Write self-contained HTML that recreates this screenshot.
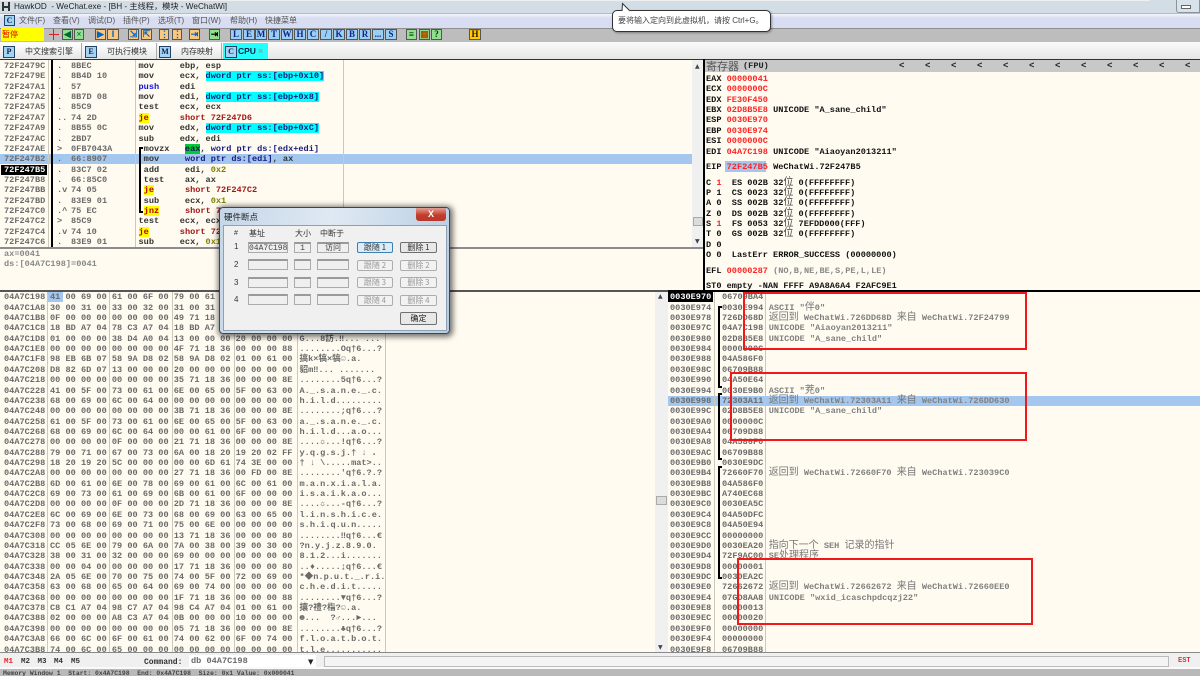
<!DOCTYPE html>
<html><head><meta charset="utf-8"><style>
html,body{margin:0;padding:0;width:1200px;height:676px;overflow:hidden;background:#fffbf0}
#w{position:absolute;left:0;top:0;width:1200px;height:676px;overflow:hidden;filter:blur(.3px);font-family:"Liberation Mono","Noto Sans CJK SC",monospace}
#w div,#w pre{position:absolute;margin:0}
pre{font:bold 8.6px/10.36px "Liberation Mono","Noto Sans CJK SC",monospace;white-space:pre}
.g{color:#6a6a6a}.d{color:#333}.k{color:#111}
.c{font:10px/0 "Noto Sans CJK SC",sans-serif;color:#777}
.cy{background:#0ff;color:#1a1a80}.ye{background:#ff0;color:#b00}.n{color:#1a1a80}.o{color:#808000}.rd{color:#a01818}.bl{color:#11d}
.gr{background:#0c3;color:#115}
.l{background:#ccc8ba;width:1px}
.u{font:8px/12px "Liberation Sans","Noto Sans CJK SC",sans-serif;color:#555;white-space:nowrap}
.b{width:10px;height:9px;top:29px;border:1px solid #555;background:#99cff2;font:bold 9px/9px "Liberation Serif",serif;color:#128;text-align:center;box-sizing:content-box}
.o2{background:#fbc77e;color:#06c}.g2{background:#90e090;color:#063}
.tab{top:43px;height:16px;background:linear-gradient(#fff,#e6e6e6);border-right:1px solid #aaa}
.ti{top:46px;width:10px;height:10px;border:1px solid #246;background:#a3d3f5;font:bold 8px/10px "Liberation Serif",serif;color:#124;text-align:center}
.t{font:8px/12px "Liberation Sans","Noto Sans CJK SC",sans-serif;color:#333;white-space:nowrap}
.inp{background:#efefef;border:1px solid #ababab;border-top:2px solid #9a9a9a;box-sizing:border-box;height:11px;font:8px/9px "Liberation Mono","Noto Sans CJK SC",monospace;color:#444;text-align:center}
.btn{width:36px;height:11px;border:1px solid #adadad;border-radius:2px;background:#f2f2f2;box-sizing:border-box;font:8px/9px "Noto Sans CJK SC",sans-serif;color:#999;text-align:center}
.bk{background:#000}
.red{border:2px solid #f01818;box-sizing:border-box}
.br{font:bold 9px/12px "Liberation Mono",monospace;color:#222;top:60px}
</style></head><body><div id="w">

<!-- title -->
<div style="left:0;top:0;width:1200px;height:14px;background:#d2dde6"></div>
<div style="left:0;top:0;width:1150px;height:1px;background:#f0f0f0"></div>
<div style="left:0;top:13px;width:1200px;height:1px;background:#b5bcc2"></div>
<div style="left:2px;top:2px;width:2px;height:9px;background:#333"></div>
<div style="left:8px;top:2px;width:2px;height:9px;background:#333"></div>
<div style="left:4px;top:6px;width:4px;height:2px;background:#333"></div>
<div class="t" style="left:14px;top:1px;font-size:8.2px;color:#222">HawkOD&nbsp; - WeChat.exe - [BH - 主线程，模块 - WeChatWi]</div>
<div style="left:1176px;top:0;width:24px;height:13px;background:#d8e2ea;border:1px solid #8a949c;border-top:0;border-radius:0 0 0 3px;box-sizing:border-box"></div>
<div style="left:1181px;top:5px;width:8px;height:2px;border:1px solid #666;background:#fff"></div>

<!-- menu -->
<div style="left:0;top:14px;width:1200px;height:14px;background:linear-gradient(#f4f6fc,#d8ddf1 30%,#d8ddf1)"></div>
<div class="ti" style="left:4px;top:15px;width:9px;height:9px">C</div>
<div class="u" style="left:19px;top:15px">文件(F)</div>
<div class="u" style="left:53px;top:15px">查看(V)</div>
<div class="u" style="left:88px;top:15px">调试(D)</div>
<div class="u" style="left:123px;top:15px">插件(P)</div>
<div class="u" style="left:158px;top:15px">选项(T)</div>
<div class="u" style="left:192px;top:15px">窗口(W)</div>
<div class="u" style="left:230px;top:15px">帮助(H)</div>
<div class="u" style="left:265px;top:15px">快捷菜单</div>

<!-- toolbar -->
<div style="left:0;top:28px;width:1200px;height:13px;background:#bdbdbd;border-top:1px solid #8f8f8f;border-bottom:1px solid #fff"></div>
<div style="left:1px;top:28px;width:42px;height:13px;background:#ffff00;font:8px/13px 'Noto Sans CJK SC',sans-serif;color:#e00000;padding-left:1px">暂停</div>
<div style="left:49px;top:34px;width:10px;height:1px;background:#d22"></div><div style="left:53px;top:29px;width:1px;height:11px;background:#d22"></div>
<div class="b g2" style="left:62px;width:9px">◀</div>
<div class="b g2" style="left:74px;width:8px">×</div>
<div class="b o2" style="left:95px;width:9px">▶</div>
<div class="b o2" style="left:107px">‖</div>
<div class="b o2" style="left:128px;width:9px">⇲</div>
<div class="b o2" style="left:141px;width:9px">⇱</div>
<div class="b o2" style="left:159px;width:8px">⋮</div>
<div class="b o2" style="left:172px;width:8px">⋮</div>
<div class="b o2" style="left:189px;width:9px">⇥</div>
<div class="b g2" style="left:209px;width:9px;color:#000">⇥</div>
<div class="b" style="left:230px">L</div><div class="b" style="left:243px">E</div><div class="b" style="left:255px">M</div><div class="b" style="left:268px">T</div><div class="b" style="left:281px">W</div><div class="b" style="left:294px">H</div><div class="b" style="left:307px">C</div><div class="b" style="left:320px">/</div><div class="b" style="left:333px">K</div><div class="b" style="left:346px">B</div><div class="b" style="left:359px">R</div><div class="b" style="left:372px">...</div><div class="b" style="left:385px">S</div>
<div class="b g2" style="left:406px;width:9px;color:#030">≡</div>
<div class="b g2" style="left:419px;width:9px;color:#a50">▦</div>
<div class="b g2" style="left:431px;width:9px;color:#030">?</div>
<div class="b" style="left:469px;width:10px;background:#fc0;color:#310">H</div>

<!-- tabs -->
<div style="left:0;top:42px;width:1200px;height:17px;background:linear-gradient(#fafafa,#e6e6e6)"></div>
<div class="tab" style="left:1px;width:80px"></div><div class="tab" style="left:84px;width:72px"></div><div class="tab" style="left:158px;width:63px"></div>
<div class="tab" style="left:223px;width:45px;background:#2ff;border:0"></div>
<div class="ti" style="left:3px">P</div><div class="t" style="left:25px;top:46px">中文搜索引擎</div>
<div class="ti" style="left:85px">E</div><div class="t" style="left:107px;top:46px">可执行模块</div>
<div class="ti" style="left:159px">M</div><div class="t" style="left:181px;top:46px">内存映射</div>
<div class="ti" style="left:225px;top:46px">C</div><div style="left:238px;top:46px;font:bold 8.5px/11px 'Liberation Sans',sans-serif;color:#124">CPU</div>
<div style="left:258px;top:46px;font:bold 9px/11px 'Liberation Sans',sans-serif;color:#7aa">×</div>

<!-- frame lines -->
<div class="bk" style="left:0;top:59px;width:1200px;height:1px;background:#333"></div>

<!-- disasm -->
<div style="left:0;top:154px;width:692px;height:10px;background:#a3c7ee"></div>
<div style="left:1px;top:165px;width:46px;height:10px;background:#000"></div>
<div class="l" style="left:48px;top:60px;height:188px"></div>
<div class="l" style="left:135px;top:60px;height:188px"></div>
<div class="l" style="left:343px;top:60px;height:188px"></div>
<div class="bk" style="left:51px;top:60px;width:2px;height:188px"></div>
<pre class="g" style="left:4px;top:61px">72F2479C
72F2479E
72F247A1
72F247A2
72F247A5
72F247A7
72F247A9
72F247AC
72F247AE
72F247B2
<span style="color:#fff">72F247B5</span>
72F247B8
72F247BB
72F247BD
72F247C0
72F247C2
72F247C4
72F247C6</pre>
<pre class="g" style="left:57px;top:61px">.
.
.
.
.
..
.
.
&gt;
.
.
.
.v
.
.^
&gt;
.v
.</pre>
<pre class="g" style="left:71px;top:61px">8BEC
8B4D 10
57
8B7D 08
85C9
74 2D
8B55 0C
2BD7
0FB7043A
66:8907
83C7 02
66:85C0
74 05
83E9 01
75 EC
85C9
74 10
83E9 01</pre>
<pre class="d" style="left:138.5px;top:61px">mov     ebp, esp
mov     ecx, <span class="cy">dword ptr ss:[ebp+0x10]</span>
<span class="bl">push</span>    edi
mov     edi, <span class="cy">dword ptr ss:[ebp+0x8]</span>
test    ecx, ecx
<span class="ye">je</span>      <span class="rd">short 72F247D6</span>
mov     edx, <span class="cy">dword ptr ss:[ebp+0xC]</span>
sub     edx, edi
 movzx   <span class="gr">eax</span>, <span class="n">word ptr ds:[edx+edi]</span>
 mov     <span class="n">word ptr ds:[edi]</span>, ax
 add     edi, <span class="o">0x2</span>
 test    ax, ax
 <span class="ye">je</span>      <span class="rd">short 72F247C2</span>
 sub     ecx, <span class="o">0x1</span>
 <span class="ye">jnz</span>     <span class="rd">short 72F247AE</span>
test    ecx, ecx
<span class="ye">je</span>      <span class="rd">short 72F247D6</span>
sub     ecx, <span class="o">0x1</span></pre>
<div class="bk" style="left:139px;top:147px;width:1.5px;height:65px"></div>
<div class="bk" style="left:139px;top:147px;width:4px;height:1.5px"></div>
<div class="bk" style="left:139px;top:211px;width:4px;height:1.5px"></div>

<!-- disasm scrollbar -->
<div style="left:692px;top:60px;width:11px;height:188px;background:#f0f0f0"></div>
<div style="left:693px;top:217px;width:10px;height:9px;background:#dcdcdc;border:1px solid #aaa;box-sizing:border-box"></div>
<div style="left:695px;top:64px;font:6px/6px 'DejaVu Sans';color:#444">▲</div>
<div style="left:695px;top:239px;font:6px/6px 'DejaVu Sans';color:#444">▼</div>

<!-- info -->
<div style="left:0;top:247px;width:703px;height:2px;background:#8c8c8c"></div>
<pre class="g" style="left:4px;top:249px;color:#888">ax=0041
ds:[04A7C198]=0041</pre>

<!-- registers -->
<div style="left:703px;top:60px;width:497px;height:231px;background:#fffbf0"></div>
<div style="left:703px;top:60px;width:497px;height:12px;background:#c8c8c8"></div>
<div class="bk" style="left:703px;top:59px;width:1.5px;height:232px"></div>
<div style="left:706px;top:59px;font:11px/14px 'Noto Sans CJK SC',sans-serif;color:#555">寄存器</div>
<div class="br" style="left:743px;font-size:8.6px">(FPU)</div>
<div class="br" style="left:899px">&lt;</div><div class="br" style="left:925px">&lt;</div><div class="br" style="left:951px">&lt;</div><div class="br" style="left:977px">&lt;</div><div class="br" style="left:1003px">&lt;</div><div class="br" style="left:1029px">&lt;</div><div class="br" style="left:1055px">&lt;</div><div class="br" style="left:1081px">&lt;</div><div class="br" style="left:1107px">&lt;</div><div class="br" style="left:1133px">&lt;</div><div class="br" style="left:1159px">&lt;</div><div class="br" style="left:1185px">&lt;</div>
<div style="left:725px;top:161px;width:41px;height:11px;background:#a3c7ee"></div>
<pre class="k" style="left:706px;top:74px">EAX <span style="color:#f22">00000041</span>
ECX <span style="color:#f22">0000000C</span>
EDX <span style="color:#f22">FE30F450</span>
EBX <span style="color:#f22">02D8B5E8</span> UNICODE "A_sane_child"
ESP <span style="color:#f22">0030E970</span>
EBP <span style="color:#f22">0030E974</span>
ESI <span style="color:#f22">0000000C</span>
EDI <span style="color:#f22">04A7C198</span> UNICODE "Aiaoyan2013211"</pre>
<pre class="k" style="left:706px;top:161.5px">EIP <span style="color:#f22">72F247B5</span> WeChatWi.72F247B5</pre>
<pre class="k" style="left:706px;top:177.5px">C <span style="color:#f22">1</span>  ES 002B 32<span class="c" style="color:#444">位</span> 0(FFFFFFFF)
P 1  CS 0023 32<span class="c" style="color:#444">位</span> 0(FFFFFFFF)
A 0  SS 002B 32<span class="c" style="color:#444">位</span> 0(FFFFFFFF)
Z 0  DS 002B 32<span class="c" style="color:#444">位</span> 0(FFFFFFFF)
S <span style="color:#f22">1</span>  FS 0053 32<span class="c" style="color:#444">位</span> 7EFDD000(FFF)
T 0  GS 002B 32<span class="c" style="color:#444">位</span> 0(FFFFFFFF)
D 0
O 0  LastErr ERROR_SUCCESS (00000000)</pre>
<pre class="k" style="left:706px;top:265.5px">EFL <span style="color:#f22">00000287</span> <span style="color:#888">(NO,B,NE,BE,S,PE,L,LE)</span></pre>
<pre class="k" style="left:706px;top:281px">ST0 empty -NAN FFFF A9A8A6A4 F2AFC9E1</pre>

<div class="bk" style="left:0;top:290px;width:1200px;height:2px;background:#555"></div>
<div class="bk" style="left:668px;top:290px;width:532px;height:2px"></div>

<!-- hex dump -->
<div class="l" style="left:47px;top:292px;height:360px"></div>
<div class="l" style="left:109px;top:292px;height:360px"></div>
<div class="l" style="left:172px;top:292px;height:360px"></div>
<div class="l" style="left:234px;top:292px;height:360px"></div>
<div class="l" style="left:297px;top:292px;height:360px"></div>
<div class="l" style="left:385px;top:292px;height:360px"></div>
<div style="left:48px;top:292px;width:15px;height:10px;background:#a3c7ee"></div>
<pre class="g" style="left:4px;top:292.3px">04A7C198
04A7C1A8
04A7C1B8
04A7C1C8
04A7C1D8
04A7C1E8
04A7C1F8
04A7C208
04A7C218
04A7C228
04A7C238
04A7C248
04A7C258
04A7C268
04A7C278
04A7C288
04A7C298
04A7C2A8
04A7C2B8
04A7C2C8
04A7C2D8
04A7C2E8
04A7C2F8
04A7C308
04A7C318
04A7C328
04A7C338
04A7C348
04A7C358
04A7C368
04A7C378
04A7C388
04A7C398
04A7C3A8
04A7C3B8</pre>
<pre class="g" style="left:50px;top:292.3px">41 00 69 00 61 00 6F 00 79 00 61 00 6E 00 32 00
30 00 31 00 33 00 32 00 31 00 31 00 00 00 00 00
0F 00 00 00 00 00 00 00 49 71 18 36 00 00 00 80
18 BD A7 04 78 C3 A7 04 18 BD A7 04 01 00 00 00
01 00 00 00 38 D4 A0 04 13 00 00 00 20 00 00 00
00 00 00 00 00 00 00 00 4F 71 18 36 00 00 00 88
98 EB 6B 07 58 9A D8 02 58 9A D8 02 01 00 61 00
D8 82 6D 07 13 00 00 00 20 00 00 00 00 00 00 00
00 00 00 00 00 00 00 00 35 71 18 36 00 00 00 8E
41 00 5F 00 73 00 61 00 6E 00 65 00 5F 00 63 00
68 00 69 00 6C 00 64 00 00 00 00 00 00 00 00 00
00 00 00 00 00 00 00 00 3B 71 18 36 00 00 00 8E
61 00 5F 00 73 00 61 00 6E 00 65 00 5F 00 63 00
68 00 69 00 6C 00 64 00 00 00 61 00 6F 00 00 00
00 00 00 00 0F 00 00 00 21 71 18 36 00 00 00 8E
79 00 71 00 67 00 73 00 6A 00 18 20 19 20 02 FF
18 20 19 20 5C 00 00 00 00 00 6D 61 74 3E 00 00
00 00 00 00 00 00 00 00 27 71 18 36 00 FD 00 8E
6D 00 61 00 6E 00 78 00 69 00 61 00 6C 00 61 00
69 00 73 00 61 00 69 00 6B 00 61 00 6F 00 00 00
00 00 00 00 0F 00 00 00 2D 71 18 36 00 00 00 8E
6C 00 69 00 6E 00 73 00 68 00 69 00 63 00 65 00
73 00 68 00 69 00 71 00 75 00 6E 00 00 00 00 00
00 00 00 00 00 00 00 00 13 71 18 36 00 00 00 80
CC 05 6E 00 79 00 6A 00 7A 00 38 00 39 00 30 00
38 00 31 00 32 00 00 00 69 00 00 00 00 00 00 00
00 00 04 00 00 00 00 00 17 71 18 36 00 00 00 80
2A 05 6E 00 70 00 75 00 74 00 5F 00 72 00 69 00
63 00 68 00 65 00 64 00 69 00 74 00 00 00 00 00
00 00 00 00 00 00 00 00 1F 71 18 36 00 00 00 88
C8 C1 A7 04 98 C7 A7 04 98 C4 A7 04 01 00 61 00
02 00 00 00 A8 C3 A7 04 0B 00 00 00 10 00 00 00
00 00 00 00 00 00 00 00 05 71 18 36 00 00 00 8E
66 00 6C 00 6F 00 61 00 74 00 62 00 6F 00 74 00
74 00 6C 00 65 00 00 00 00 00 00 00 00 00 00 00</pre>
<pre class="g" style="left:299.5px;top:292.3px">A.i.a.o.y.a.n.2.
0.1.3.2.1.1.....
☼.......Iq†6...?
?.?x?.?.?.?.?...
G...8訪.‼... ...
........Oq†6...?
搞k×犒×犒☺.a.
貂m‼... .......
........5q†6...?
A._.s.a.n.e._.c.
h.i.l.d.........
........;q†6...?
a._.s.a.n.e._.c.
h.i.l.d...a.o...
....☼...!q†6...?
y.q.g.s.j.† ↓ ．
† ↓ \.....mat&gt;..
........'q†6.?.?
m.a.n.x.i.a.l.a.
i.s.a.i.k.a.o...
....☼...-q†6...?
l.i.n.s.h.i.c.e.
s.h.i.q.u.n.....
........‼q†6...€
?n.y.j.z.8.9.0.
8.1.2...i.......
..♦.....↨q†6...€
*◆n.p.u.t._.r.i.
c.h.e.d.i.t.....
........▼q†6...?
攘?禮?栺?☺.a.
☻...  ?♂...►...
........♣q†6...?
f.l.o.a.t.b.o.t.
t.l.e...........</pre>

<!-- mid scrollbar -->
<div style="left:655px;top:292px;width:13px;height:360px;background:#f0f0f0"></div>
<div style="left:656px;top:496px;width:11px;height:9px;background:#dcdcdc;border:1px solid #aaa;box-sizing:border-box"></div>
<div style="left:658px;top:294px;font:6px/6px 'DejaVu Sans';color:#444">▲</div>
<div style="left:658px;top:645px;font:6px/6px 'DejaVu Sans';color:#444">▼</div>

<!-- stack -->
<div style="left:668px;top:396px;width:532px;height:10px;background:#a3c7ee"></div>
<div style="left:668px;top:292px;width:45px;height:10px;background:#000"></div>
<div class="l" style="left:714px;top:292px;height:360px"></div>
<div class="l" style="left:765px;top:292px;height:360px"></div>
<pre class="g" style="left:670px;top:292.3px"><span style="color:#fff">0030E970</span>
0030E974
0030E978
0030E97C
0030E980
0030E984
0030E988
0030E98C
0030E990
0030E994
0030E998
0030E99C
0030E9A0
0030E9A4
0030E9A8
0030E9AC
0030E9B0
0030E9B4
0030E9B8
0030E9BC
0030E9C0
0030E9C4
0030E9C8
0030E9CC
0030E9D0
0030E9D4
0030E9D8
0030E9DC
0030E9E0
0030E9E4
0030E9E8
0030E9EC
0030E9F0
0030E9F4
0030E9F8</pre>
<pre class="g" style="left:722px;top:292.3px">06709BA4
0030E994
726DD68D
04A7C198
02D8B5E8
0000000C
04A586F0
06709B88
04A50E64
0030E9B0
72303A11
02D8B5E8
0000000C
06709D88
04A586F0
06709B88
0030E9DC
72660F70
04A586F0
A740EC68
0030EA5C
04A50DFC
04A50E94
00000000
0030EA20
72F9AC00
00000001
0030EA2C
72662672
07GD8AA8
00000013
00000020
00000000
00000000
06709B88</pre>
<div class="bk" style="left:718px;top:306px;width:1.5px;height:81px"></div><div class="bk" style="left:718px;top:306px;width:4px;height:1.5px"></div><div class="bk" style="left:718px;top:386px;width:4px;height:1.5px"></div>
<div class="bk" style="left:718px;top:393px;width:1.5px;height:66px"></div><div class="bk" style="left:718px;top:393px;width:4px;height:1.5px"></div><div class="bk" style="left:718px;top:458px;width:4px;height:1.5px"></div>
<div class="bk" style="left:718px;top:466px;width:1.5px;height:112px"></div><div class="bk" style="left:718px;top:466px;width:4px;height:1.5px"></div><div class="bk" style="left:718px;top:577px;width:4px;height:1.5px"></div>
<pre class="g" style="left:768.7px;top:302.66px;color:#808080">ASCII "<span class="c">伴</span>0"
<span class="c">返回到</span> WeChatWi.726DD68D <span class="c">来自</span> WeChatWi.72F24799
UNICODE "Aiaoyan2013211"
UNICODE "A_sane_child"




ASCII "<span class="c">茺</span>0"
<span class="c">返回到</span> WeChatWi.72303A11 <span class="c">来自</span> WeChatWi.726DD630
UNICODE "A_sane_child"





<span class="c">返回到</span> WeChatWi.72660F70 <span class="c">来自</span> WeChatWi.723039C0






<span class="c">指向下一个</span> SEH <span class="c">记录的指针</span>
SE<span class="c">处理程序</span>


<span class="c">返回到</span> WeChatWi.72662672 <span class="c">来自</span> WeChatWi.72660EE0
UNICODE "wxid_icaschpdcqzj22"</pre>
<div class="red" style="left:743px;top:292px;width:284px;height:58px"></div>
<div class="red" style="left:730px;top:372px;width:297px;height:69px"></div>
<div class="red" style="left:737px;top:558px;width:296px;height:67px"></div>

<!-- bottom -->
<div style="left:0;top:652px;width:1200px;height:15px;background:#f0f0f0;border-top:1px solid #8a8a8a;box-sizing:border-box"></div>
<div style="left:0;top:667px;width:1200px;height:2px;background:#fafafa"></div>
<div style="left:0;top:669px;width:1200px;height:7px;background:#b9b9b9"></div>
<div class="k" style="left:4px;top:656px;font:bold 7.5px/12px 'Liberation Mono',monospace;color:#e22">M1</div>
<div style="left:21px;top:656px;font:bold 7.5px/12px 'Liberation Mono',monospace;color:#333">M2</div>
<div style="left:37.5px;top:656px;font:bold 7.5px/12px 'Liberation Mono',monospace;color:#333">M3</div>
<div style="left:54px;top:656px;font:bold 7.5px/12px 'Liberation Mono',monospace;color:#333">M4</div>
<div style="left:71px;top:656px;font:bold 7.5px/12px 'Liberation Mono',monospace;color:#333">M5</div>
<div style="left:144px;top:657px;font:bold 8px/12px 'Liberation Mono',monospace;color:#333">Command:</div>
<div style="left:189px;top:655px;width:127px;height:12px;background:#fff"></div>
<pre class="g" style="left:191px;top:655.5px">db 04A7C198</pre>
<div style="left:308px;top:659px;font:7px/7px 'DejaVu Sans';color:#222">▼</div>
<div style="left:324px;top:656px;width:845px;height:11px;border:1px solid #bbb;background:#f4f4f4;box-sizing:border-box"></div>
<div style="left:1178px;top:656px;font:bold 7px/11px 'Liberation Mono',monospace;color:#d33">EST</div>
<div style="left:3px;top:670px;font:bold 6.4px/7px 'Liberation Mono',monospace;color:#444;white-space:pre">Memory Window 1  Start: 0x4A7C198  End: 0x4A7C198  Size: 0x1 Value: 0x000041</div>

<!-- dialog -->
<div style="left:219px;top:207px;width:231px;height:127px;background:linear-gradient(100deg,#c5d6e8,#dfe9f3 45%,#b6cce2);border:1px solid #37475a;border-radius:4px;box-sizing:border-box;box-shadow:1px 1px 6px 2px rgba(0,0,0,.55)"></div>
<div style="left:223px;top:225px;width:224px;height:106px;background:#f0f0f0;border:1px solid #8ea0b3;box-sizing:border-box"></div>
<div style="left:416px;top:208px;width:30px;height:13px;background:linear-gradient(#e2a094,#c43b2c 55%,#b53a2c);border-radius:0 0 3px 3px;color:#fff;font:bold 9px/12px 'Liberation Sans',sans-serif;text-align:center">X</div>
<div style="left:224px;top:211px;font:8.5px/12px 'Noto Sans CJK SC',sans-serif;color:#222">硬件断点</div>
<div class="u" style="left:234px;top:228px;font-size:7px;color:#333">#</div>
<div class="u" style="left:249px;top:228px;color:#333">基址</div>
<div class="u" style="left:295px;top:228px;color:#333">大小</div>
<div class="u" style="left:320px;top:228px;color:#333">中断于</div>
<div class="u" style="left:234px;top:241px;font-size:8px;color:#333">1</div>
<div class="u" style="left:234px;top:259px;font-size:8px;color:#333">2</div>
<div class="u" style="left:234px;top:277px;font-size:8px;color:#333">3</div>
<div class="u" style="left:234px;top:294px;font-size:8px;color:#333">4</div>

<div class="inp" style="left:248px;top:242px;width:40px">04A7C198</div><div class="inp" style="left:294px;top:242px;width:17px">1</div><div class="inp" style="left:317px;top:242px;width:32px">访问</div>
<div class="inp" style="left:248px;top:259px;width:40px"></div><div class="inp" style="left:294px;top:259px;width:17px"></div><div class="inp" style="left:317px;top:259px;width:32px"></div>
<div class="inp" style="left:248px;top:277px;width:40px"></div><div class="inp" style="left:294px;top:277px;width:17px"></div><div class="inp" style="left:317px;top:277px;width:32px"></div>
<div class="inp" style="left:248px;top:294px;width:40px"></div><div class="inp" style="left:294px;top:294px;width:17px"></div><div class="inp" style="left:317px;top:294px;width:32px"></div>

<div class="btn" style="left:357px;top:242px;border:1px solid #3c7fb1;color:#333;background:#dcecf8">跟随 1</div><div class="btn" style="left:400px;top:242px;width:37px;border-color:#707070;color:#333;background:#e8e8e8">删除 1</div>
<div class="btn" style="left:357px;top:260px">跟随 2</div><div class="btn" style="left:400px;top:260px;width:37px">删除 2</div>
<div class="btn" style="left:357px;top:277px">跟随 3</div><div class="btn" style="left:400px;top:277px;width:37px">删除 3</div>
<div class="btn" style="left:357px;top:295px">跟随 4</div><div class="btn" style="left:400px;top:295px;width:37px">删除 4</div>
<div class="btn" style="left:400px;top:312px;width:37px;height:13px;line-height:11px;border-color:#707070;color:#222;background:#e8e8e8">确定</div>

<!-- tooltip -->
<div style="left:612px;top:10px;width:159px;height:22px;background:#fff;border:1px solid #333;border-radius:5px;box-sizing:border-box;box-shadow:1px 1px 2px rgba(0,0,0,.35)"></div>
<svg style="position:absolute;left:618px;top:2px" width="16" height="10"><path d="M4 9 L4.500 1.500 L12 9" fill="#fff" stroke="#333" stroke-width="1"/><path d="M4.500 9.500H11.500" stroke="#fff" stroke-width="1.500"/></svg>
<div style="left:618px;top:15px;font:8px/12px 'Liberation Sans','Noto Sans CJK SC',sans-serif;color:#444;white-space:nowrap">要将输入定向到此虚拟机，请按 Ctrl+G。</div>

</div></body></html>
